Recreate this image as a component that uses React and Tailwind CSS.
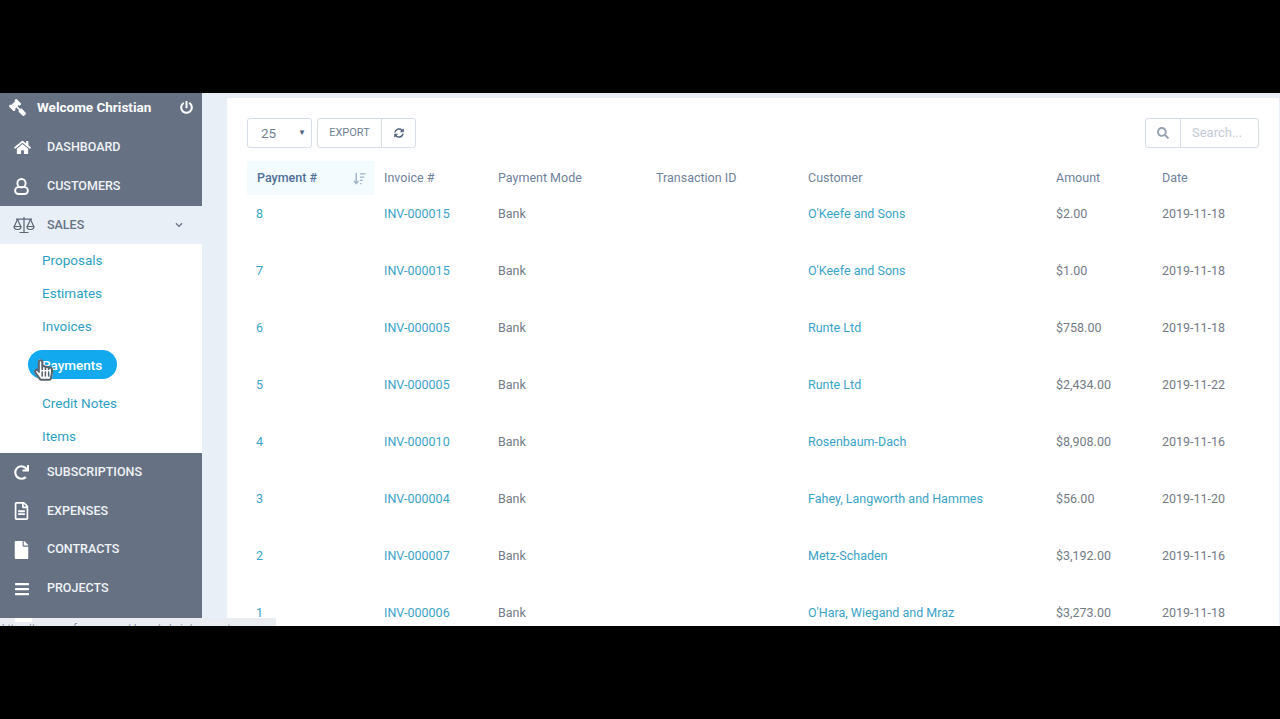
import React from 'react';
import { FaGavel, FaPowerOff, FaHome, FaRedo, FaRegFileAlt, FaFile, FaBars, FaSearch, FaSyncAlt, FaChevronDown, FaHandPointer, FaRegHandPointer } from 'react-icons/fa';

// --- Data ---

const payments = [
  { id: 8, invoice: 'INV-000015', customer: "O'Keefe and Sons", amount: '$2.00', date: '2019-11-18' },
  { id: 7, invoice: 'INV-000015', customer: "O'Keefe and Sons", amount: '$1.00', date: '2019-11-18' },
  { id: 6, invoice: 'INV-000005', customer: 'Runte Ltd', amount: '$758.00', date: '2019-11-18' },
  { id: 5, invoice: 'INV-000005', customer: 'Runte Ltd', amount: '$2,434.00', date: '2019-11-22' },
  { id: 4, invoice: 'INV-000010', customer: 'Rosenbaum-Dach', amount: '$8,908.00', date: '2019-11-16' },
  { id: 3, invoice: 'INV-000004', customer: 'Fahey, Langworth and Hammes', amount: '$56.00', date: '2019-11-20' },
  { id: 2, invoice: 'INV-000007', customer: 'Metz-Schaden', amount: '$3,192.00', date: '2019-11-16' },
  { id: 1, invoice: 'INV-000006', customer: "O'Hara, Wiegand and Mraz", amount: '$3,273.00', date: '2019-11-18' },
];

const UserOutline = ({ className }) => (
  <svg viewBox="0 0 16 18" className={className} fill="none" stroke="currentColor" strokeWidth="2">
    <ellipse cx="8" cy="5.5" rx="4.4" ry="4.5" />
    <rect x="1.2" y="9.6" width="13.6" height="7.4" rx="3.6" />
  </svg>
);

const ScaleIcon = () => (
  <svg viewBox="0 0 22 18" className="w-[22px] h-[18px] text-[#5a6675]" fill="none" stroke="currentColor" strokeWidth="1.2">
    <path d="M11 1v15M6.5 16.5h9M3 3.2h16" />
    <path d="M4.5 3.5 1.2 10.5M4.5 3.5 7.8 10.5M17.5 3.5 14.2 10.5M17.5 3.5 20.8 10.5" />
    <path d="M1 10.5h7a3.5 3 0 0 1-7 0ZM14 10.5h7a3.5 3 0 0 1-7 0Z" />
  </svg>
);

const SortIcon = () => (
  <svg viewBox="0 0 14 14" className="w-[13px] h-[13px] text-[#9fb2c9]" fill="none" stroke="currentColor" strokeWidth="1.5">
    <path d="M3.5 1v11M1 9.5 3.5 12.5 6 9.5" />
    <path d="M7.5 2h6M7.5 5.5h4.5M7.5 9h3M7.5 12.5h1.5" />
  </svg>
);

// --- Sidebar ---

const NavItem = ({ icon, label, className = 'h-[39px]' }) => (
  <div className={`flex items-center text-white ${className}`}>
    <span className="w-[47px] pl-[14px] flex items-center">{icon}</span>
    <span className="text-[12.5px] font-medium text-[#f1f3f6]">{label}</span>
  </div>
);

const SubItem = ({ label, className }) => (
  <div className={`flex items-center pl-[42px] text-[13.5px] text-[#2e9fc4] ${className}`}>{label}</div>
);

const Sidebar = () => (
  <aside className="w-[202px] shrink-0 bg-[#667284]">
    <div className="h-[29px] flex items-center text-white pl-[9px] pr-[9px]">
      <FaGavel className="w-[17px] h-[17px] -scale-x-100" />
      <span className="ml-[11px] text-[13.5px] font-bold flex-1">Welcome Christian</span>
      <FaPowerOff className="w-[13px] h-[13px]" />
    </div>
    <div className="h-[6px]" />
    <NavItem icon={<FaHome className="w-[17px] h-[17px]" />} label="DASHBOARD" />
    <NavItem icon={<UserOutline className="w-[15px] h-[17px]" />} label="CUSTOMERS" />
    <div className="h-[38px] flex items-center bg-[#e9eff6] text-[#667284] pr-[19px]">
      <span className="w-[47px] pl-[13px] flex items-center"><ScaleIcon /></span>
      <span className="text-[12.5px] font-medium flex-1">SALES</span>
      <FaChevronDown className="w-[8px] h-[8px]" />
    </div>
    <div className="h-[209px] bg-white flex flex-col">
      <SubItem label="Proposals" className="h-[33px]" />
      <SubItem label="Estimates" className="h-[33px]" />
      <SubItem label="Invoices" className="h-[33px]" />
      <div className="h-[45px] flex items-center pl-[28px]">
        <div className="relative h-[29px] w-[89px] rounded-full bg-[#12a9ef] pl-[14px] flex items-center text-[13.5px] font-medium text-white">
          Payments
          <span className="absolute left-[6px] top-[7px] w-[19px] h-[26px]">
            <FaHandPointer className="absolute inset-0 w-full h-full text-white" />
            <FaRegHandPointer className="absolute inset-0 w-full h-full text-[#5a626c]" />
          </span>
        </div>
      </div>
      <SubItem label="Credit Notes" className="h-[32px]" />
      <SubItem label="Items" className="h-[34px]" />
    </div>
    <NavItem icon={<FaRedo className="w-[15px] h-[15px]" />} label="SUBSCRIPTIONS" />
    <NavItem icon={<FaRegFileAlt className="w-[15px] h-[18px]" />} label="EXPENSES" className="h-[38px]" />
    <NavItem icon={<FaFile className="w-[15px] h-[18px]" />} label="CONTRACTS" />
    <NavItem icon={<FaBars className="w-[16px] h-[16px]" />} label="PROJECTS" />
  </aside>
);

// --- Payments table ---

const Toolbar = () => (
  <div className="flex items-center justify-between h-[30px]">
    <div className="flex items-center gap-[5px]">
      <div className="w-[65px] h-[30px] border border-[#d7dde5] rounded-[3px] flex items-center pl-[13px] pr-[5px] text-[13.5px] text-[#707f92]">
        <span className="flex-1">25</span>
        <span className="text-[8px] text-[#4c5f7a]">▼</span>
      </div>
      <div className="flex h-[30px] border border-[#d7dde5] rounded-[3px] text-[#6f7f94]">
        <div className="w-[64px] border-r border-[#d7dde5] flex items-center justify-center text-[11px]">EXPORT</div>
        <div className="w-[33px] flex items-center justify-center"><FaSyncAlt className="w-[10px] h-[10px] text-[#55677f]" /></div>
      </div>
    </div>
    <div className="flex h-[30px] border border-[#d7dde5] rounded-[3px]">
      <div className="w-[35px] border-r border-[#d7dde5] flex items-center justify-center"><FaSearch className="w-[12px] h-[12px] text-[#98a3b1]" /></div>
      <div className="w-[77px] pl-[11px] flex items-center text-[13px] text-[#c3ccd6]">Search...</div>
    </div>
  </div>
);

const PaymentsTable = () => (
  <table className="w-[1001px] table-fixed border-collapse mt-[13px] text-[12.5px]">
    <colgroup>
      <col className="w-[127px]" />
      <col className="w-[114px]" />
      <col className="w-[158px]" />
      <col className="w-[152px]" />
      <col className="w-[248px]" />
      <col className="w-[106px]" />
      <col className="w-[96px]" />
    </colgroup>
    <thead>
      <tr className="h-[34px] text-left text-[#6f829c]">
        <th className="pl-[10px] pr-[8px] pt-[1px] font-medium bg-[#f3fbff] text-[#4f6f98]">
          <div className="flex items-center justify-between">Payment #<SortIcon /></div>
        </th>
        <th className="pl-[10px] pt-[1px] font-normal">Invoice #</th>
        <th className="pl-[10px] pt-[1px] font-normal">Payment Mode</th>
        <th className="pl-[10px] pt-[1px] font-normal">Transaction ID</th>
        <th className="pl-[10px] pt-[1px] font-normal">Customer</th>
        <th className="pl-[10px] pt-[1px] font-normal">Amount</th>
        <th className="pl-[10px] pt-[1px] font-normal">Date</th>
      </tr>
    </thead>
    <tbody>
      {payments.map(row => (
        <tr key={row.id} className="h-[57px] align-top text-[#737b86]">
          <td className="pl-[9px] pt-[10px] text-[#3aa3c8]">{row.id}</td>
          <td className="pl-[10px] pt-[10px] text-[#3aa3c8]">{row.invoice}</td>
          <td className="pl-[10px] pt-[10px]">Bank</td>
          <td className="pl-[10px] pt-[10px]"></td>
          <td className="pl-[10px] pt-[10px] text-[#3aa3c8]">{row.customer}</td>
          <td className="pl-[10px] pt-[10px]">{row.amount}</td>
          <td className="pl-[10px] pt-[10px]">{row.date}</td>
        </tr>
      ))}
    </tbody>
  </table>
);

export default function App() {
  return (
    <div className="h-[719px] bg-black overflow-hidden flex flex-col font-['Roboto',sans-serif]">
      <div className="h-[93px] shrink-0" />
      <div className="h-[533px] shrink-0 flex relative overflow-hidden bg-[#e9eff6]">
        <Sidebar />
        <main className="ml-[25px] mt-[5px] w-[1052px] bg-white pt-[20px] pl-[20px] pr-[20px] overflow-hidden">
          <Toolbar />
          <PaymentsTable />
        </main>
        {/* browser status bar */}
        <div className="absolute left-0 bottom-0 w-[276px] h-[8px] bg-[#e9edf1] overflow-hidden text-[10px] leading-[12px] text-[#7b8490] pl-[2px] pt-[5px]">
          <span className="absolute left-[15px] top-0 w-[17px] h-[4px] bg-white" />
          https://www.perfexcrm.com/demo/admin/payments
        </div>
      </div>
      <div className="flex-1" />
    </div>
  );
}
